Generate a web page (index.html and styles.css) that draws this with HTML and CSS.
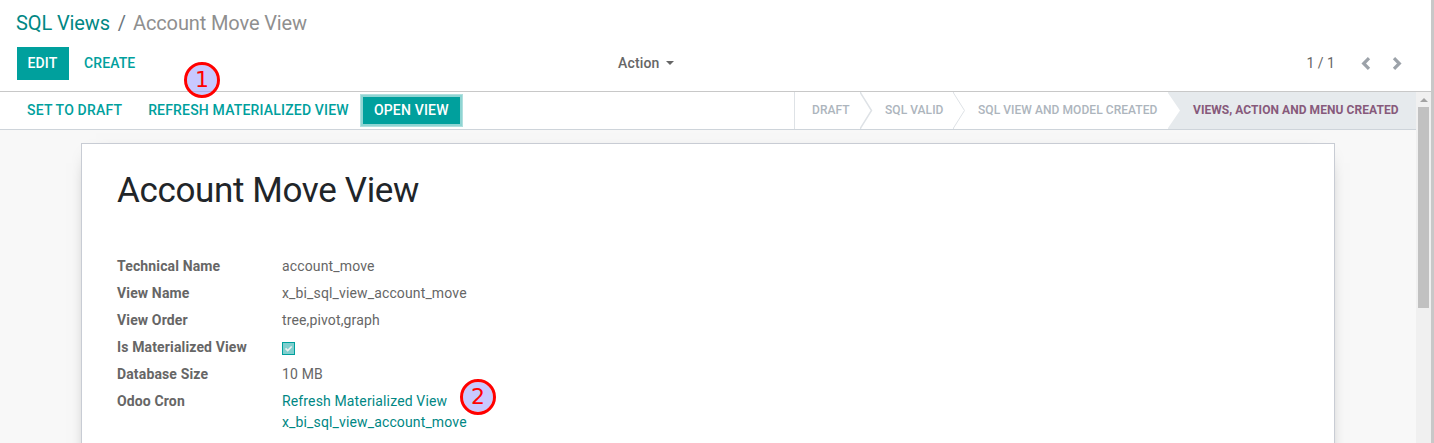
FILE: index.html
```html
<!DOCTYPE html>
<html lang="en">
<head>
<meta charset="utf-8">
<title>Account Move View</title>
<link rel="stylesheet" href="styles.css">
</head>
<body>
<div class="app">
  <header class="control-panel">
    <div class="breadcrumb"><a class="crumb-link">SQL Views</a><span class="crumb-sep">/</span><span class="crumb-current">Account Move View</span></div>
    <div class="toolbar">
      <div class="toolbar-buttons">
        <button class="btn btn-primary">EDIT</button>
        <button class="btn btn-create">CREATE</button>
      </div>
      <div class="action-menu"><span class="action-label">Action</span><span class="caret"></span></div>
      <div class="pager">
        <span class="pager-value">1 / 1</span>
        <svg class="pager-icon" width="12" height="14" viewBox="0 0 12 14"><path d="M9 1.200 3.700 6.500 9 11.800"/></svg>
        <svg class="pager-icon pager-next" width="12" height="14" viewBox="0 0 12 14"><path d="M3 1.200 8.300 6.500 3 11.800"/></svg>
      </div>
    </div>
  </header>
  <div class="content">
    <main class="form-view">
      <div class="statusbar">
        <div class="status-buttons">
          <button class="btn btn-draft">SET TO DRAFT</button>
          <button class="btn btn-refresh">REFRESH MATERIALIZED VIEW</button>
          <button class="btn btn-open">OPEN VIEW</button>
        </div>
        <div class="stages">
          <span class="stage stage-draft">DRAFT</span>
          <svg class="chevron" width="13" height="37" viewBox="0 0 13 37"><path class="chevron-line" d="M.5 0v1L11.500 18.500.5 36v1"/></svg>
          <span class="stage stage-valid">SQL VALID</span>
          <svg class="chevron" width="13" height="37" viewBox="0 0 13 37"><path class="chevron-line chevron-thin" d="M.5 0v1L11.500 18.500.5 36v1"/></svg>
          <span class="stage stage-model">SQL VIEW AND MODEL CREATED</span>
          <svg class="chevron" width="13" height="37" viewBox="0 0 13 37"><path class="chevron-fill" d="M0 0h13v37H0v-1L12 18.500 0 1z"/></svg>
          <span class="stage stage-active">VIEWS, ACTION AND MENU CREATED</span>
        </div>
      </div>
      <div class="sheet-area">
        <section class="sheet">
          <h1 class="title">Account Move View</h1>
          <dl class="fields">
            <dt>Technical Name</dt><dd>account_move</dd>
            <dt>View Name</dt><dd>x_bi_sql_view_account_move</dd>
            <dt>View Order</dt><dd>tree,pivot,graph</dd>
            <dt>Is Materialized View</dt><dd><span class="checkbox"><svg width="11" height="11" viewBox="0 0 11 11"><path d="M2.500 5.300 4.700 7.500 8.700 3.500"/></svg></span></dd>
            <dt>Database Size</dt><dd>10 MB</dd>
            <dt>Odoo Cron</dt><dd class="cron">Refresh Materialized View<br>x_bi_sql_view_account_move</dd>
          </dl>
        </section>
      </div>
    </main>
    <div class="scrollbar"><span class="scroll-up"></span><span class="scroll-thumb"></span></div>
  </div>
  <span class="marker marker-one">1</span>
  <span class="marker marker-two">2</span>
</div>
</body>
</html>
```
FILE: styles.css
```css
* { box-sizing: border-box; }
body {
  margin: 0;
  overflow: hidden;
  background: #fff;
  color: #666;
  font: 14px/21px Roboto, sans-serif;
}
.app {
  position: relative;
  display: flex;
  flex-direction: column;
  height: 443px;
  border-right: 3px solid #c8c8c8;
}
.control-panel {
  flex: none;
  height: 92px;
  padding: 8px 28px 0 17px;
  border-bottom: 1px solid #c8c8c8;
}
.breadcrumb {
  height: 39px;
  margin-left: -1px;
  font-size: 20px;
  line-height: 30px;
  letter-spacing: -0.12px;
  white-space: nowrap;
}
.crumb-link { color: #008784; }
.crumb-sep { padding: 0 7px 0 8px; color: #6c757d; }
.crumb-current { color: #8f8f8f; }
.toolbar { display: flex; align-items: center; height: 33px; }
.toolbar-buttons { display: flex; width: 601px; }
.btn {
  flex: none;
  margin: 0;
  padding: 0;
  border: 0;
  background: none;
  color: #00a09d;
  font: 500 14px/21px Roboto, sans-serif;
  letter-spacing: 0.18px;
  text-align: center;
  white-space: nowrap;
}
.btn-primary { width: 52px; height: 33px; padding-right: 1px; background: #00a09d; color: #fff; }
.btn-create { margin-left: 15px; letter-spacing: 0.1px; }
.action-menu { display: flex; align-items: center; gap: 7px; font-weight: 500; letter-spacing: 0.15px; }
.caret { margin-bottom: 2px; border: 4px solid transparent; border-top-color: #666; border-bottom: 0; }
.pager { display: flex; align-items: center; margin-left: auto; }
.pager-value { margin-right: 25px; }
.pager-icon { fill: none; stroke: #9ca2a9; stroke-width: 3.2; }
.pager-next { margin-left: 19px; }
.content { display: flex; flex: 1; min-height: 0; }
.form-view { display: flex; flex: 1; flex-direction: column; min-width: 0; }
.statusbar {
  display: flex;
  flex: none;
  justify-content: space-between;
  height: 38px;
  border-bottom: 1px solid #ced4da;
}
.status-buttons { display: flex; align-items: center; padding-left: 27px; }
.btn-refresh { margin-left: 26px; }
.btn-open {
  width: 97px;
  height: 27px;
  margin-left: 14px;
  background: #00a09d;
  box-shadow: 0 0 0 2px #8fd5d3, 0 0 0 3px #b0e0df;
  color: #fff;
}
.stages {
  display: flex;
  width: 622px;
  border-left: 1px solid #dee2e6;
  color: #adb5bd;
  font-size: 12px;
  font-weight: 500;
  line-height: 36px;
  letter-spacing: 0.06px;
  white-space: nowrap;
}
.stage { flex: none; }
.stage-draft { width: 65px; padding-left: 17px; }
.stage-valid { width: 80px; padding-left: 12px; }
.stage-model { width: 202px; padding-left: 12px; }
.stage-active { flex: 1; padding-left: 12px; background: #e6eaed; color: #875a7b; font-weight: 700; }
.chevron { flex: none; }
.chevron-line { fill: none; stroke: #dee2e6; stroke-width: 1.5; }
.chevron-thin { stroke-width: 1; }
.chevron-fill { fill: #e6eaed; }
.sheet-area { flex: 1; min-height: 0; padding: 13px 81px 0; overflow: hidden; background: #f8f8f8; }
.sheet {
  height: 420px;
  padding: 21px 35px;
  border: 1px solid #c8ccd4;
  background: #fff;
  box-shadow: 0 5px 20px -15px #000;
}
.title {
  margin: 0;
  color: #212529;
  font-size: 35px;
  font-weight: 400;
  line-height: 52px;
  letter-spacing: -0.36px;
}
.fields {
  display: grid;
  grid-template-columns: 165px 1fr;
  row-gap: 6px;
  margin: 39px 0 0;
  letter-spacing: 0.14px;
}
.fields dt { font-weight: 700; }
.fields dd { margin: 0; }
.fields .cron { color: #008784; }
.checkbox {
  display: flex;
  width: 13px;
  height: 13px;
  margin-top: 5px;
  border: 1px solid #00a09d;
  background: #80cfce;
}
.checkbox svg { fill: none; stroke: #eee; stroke-width: 1.7; }
.scrollbar { display: flex; flex: none; flex-direction: column; align-items: center; width: 15px; background: #f0f0f0; }
.scroll-up { margin: 6px 0 5px; border: 4px solid transparent; border-top: 0; border-bottom-color: #a3a3a3; }
.scroll-thumb { width: 11px; height: 201px; background: #c1c1c1; }
.marker {
  position: absolute;
  width: 36px;
  height: 36px;
  border: 3px solid #f00;
  border-radius: 50%;
  background: rgba(146, 146, 255, 0.5);
  background-clip: padding-box;
  color: #f00;
  font: 22px/30px "DejaVu Sans", sans-serif;
  text-align: center;
}
.marker-one { left: 184px; top: 62px; }
.marker-two { left: 460px; top: 379px; }
```
